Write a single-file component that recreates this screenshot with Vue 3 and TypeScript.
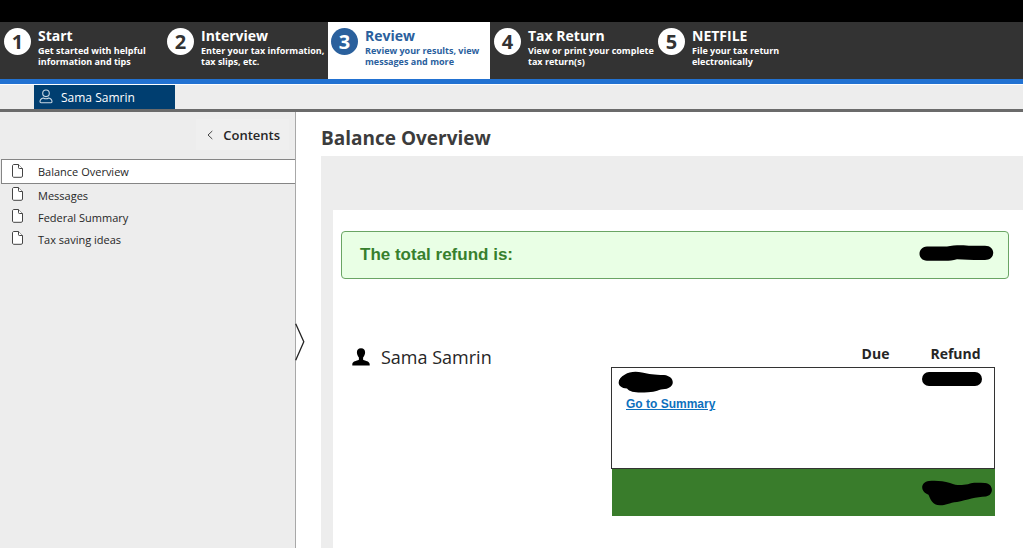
<script setup lang="ts">
interface Step {
  id: number
  title: string
  lines: string[]
}

const steps: Step[] = [
  { id: 1, title: 'Start', lines: ['Get started with helpful', 'information and tips'] },
  { id: 2, title: 'Interview', lines: ['Enter your tax information,', 'tax slips, etc.'] },
  { id: 3, title: 'Review', lines: ['Review your results, view', 'messages and more'] },
  { id: 4, title: 'Tax Return', lines: ['View or print your complete', 'tax return(s)'] },
  { id: 5, title: 'NETFILE', lines: ['File your tax return', 'electronically'] },
]
const activeStep = 3

const pages: string[] = ['Balance Overview', 'Messages', 'Federal Summary', 'Tax saving ideas']
const activePage = 'Balance Overview'
const person = 'Sama Samrin'
</script>

<template>
  <div class="app">
    <header>
      <div class="titlebar"></div>
      <nav class="steps">
        <button
          v-for="step in steps"
          :key="step.id"
          type="button"
          class="step"
          :class="{ active: step.id === activeStep }"
        >
          <span class="number">{{ step.id }}</span>
          <span class="step-text">
            <span class="step-title">{{ step.title }}</span>
            <span v-for="line in step.lines" :key="line" class="step-line">{{ line }}</span>
          </span>
        </button>
      </nav>
      <div class="people">
        <button type="button" class="person-tab">
          <svg width="14" height="16" viewBox="0 0 14 16" fill="none" stroke="#c9d8e4" stroke-width="1.1">
            <circle cx="7" cy="4.300" r="3.300" />
            <path d="M4.300 9C2.300 9.500 1 11.200 1 12.800c0 .6.4.9 1 .9h10c.6 0 1-.3 1-.9 0-1.600-1.300-3.300-3.300-3.800-1.600.9-3.800.9-5.400 0z" />
          </svg>
          <span>{{ person }}</span>
        </button>
      </div>
    </header>

    <div class="body">
      <aside class="sidebar">
        <button type="button" class="contents">
          <svg width="6" height="10" viewBox="0 0 6 10" fill="none" stroke="#444" stroke-width="1">
            <path d="M5.300 1L1 5l4.300 4" />
          </svg>
          <span>Contents</span>
        </button>
        <nav class="pages">
          <a v-for="page in pages" :key="page" href="#" class="page" :class="{ active: page === activePage }">
            <svg width="11" height="14" viewBox="0 0 11 14" fill="#fff" stroke="#444" stroke-width="1">
              <path d="M2 .5h4.500l4 4V12c0 .8-.5 1.300-1.300 1.300H2C1.100 13.300.5 12.800.5 12V2C.5 1 1.100.5 2 .5z" />
              <path d="M6.500.5v3.200c0 .5.3.8.8.8h3.200" />
            </svg>
            <span>{{ page }}</span>
          </a>
        </nav>
        <button type="button" class="expander" aria-label="Resize contents">
          <svg width="10" height="38" viewBox="0 0 10 38" fill="none" stroke="#222" stroke-width="1.300">
            <path d="M.7 .7L8.800 18.800.7 37.300" />
          </svg>
        </button>
      </aside>

      <main class="main">
        <h1>Balance Overview</h1>
        <div class="frame">
          <div class="sheet">
            <section class="banner">
              <h2>The total refund is:</h2>
              <svg width="75" height="17" viewBox="0 0 75 17">
                <path d="M8 1.500h20C35-.3 46-.1 52 .8h14c11 0 11 14 0 14.200-12 .3-20-.8-28-.8-6 2-12 1.500-16 1.500H8C-2 15.500-2 2 8 1.500z" />
              </svg>
            </section>
            <section class="details">
              <div class="person">
                <svg width="18" height="18" viewBox="0 0 18 18">
                  <path d="M9 .3c2.800 0 4.200 1.700 4.100 4.200-.1 2-1 3.800-2 4.900v2.300c2.200 1.200 6.600 1.400 6.600 4.600v1.200H.3v-1.200c0-3.200 4.400-3.400 6.600-4.600V9.400c-1-1.100-1.900-2.900-2-4.900C4.800 2 6.200.3 9 .3z" />
                </svg>
                <span>{{ person }}</span>
              </div>
              <table class="totals">
                <colgroup>
                  <col />
                  <col class="amount" />
                  <col class="amount" />
                </colgroup>
                <thead>
                  <tr>
                    <td></td>
                    <th scope="col">Due</th>
                    <th scope="col">Refund</th>
                  </tr>
                </thead>
                <tbody>
                  <tr>
                    <td class="source">
                      <svg width="55" height="22" viewBox="0 0 55 22">
                        <path d="M7 3.500C11 .5 18 0 24 1.400c7 1.700 12 2 22 2.600 11 1 12 12.500 1 14-6 .2-9 3.200-17 3.200-10 .5-18 .5-21-3.700C-1.500 17-2 8 7 3.500z" />
                      </svg>
                      <a href="#">Go to Summary</a>
                    </td>
                    <td></td>
                    <td class="value">
                      <svg width="60" height="14" viewBox="0 0 60 14">
                        <rect width="60" height="14" rx="7" />
                      </svg>
                    </td>
                  </tr>
                </tbody>
                <tfoot>
                  <tr>
                    <td></td>
                    <td></td>
                    <td class="value">
                      <svg width="70" height="26" viewBox="0 0 70 26">
                        <path d="M7 1c7-.8 14 0 21 2 8 3.200 12 2 18 1.300C51 2 57 3 63 3c9 .5 9 12.500 1 13.500-10 .2-19 3.500-29 5.500-8 .8-12 3.500-17 3.300C10 25 8.500 19 6.500 14.700-2 12-2 2 7 1z" />
                      </svg>
                    </td>
                  </tr>
                </tfoot>
              </table>
            </section>
          </div>
        </div>
      </main>
    </div>
  </div>
</template>

<style>
body {
  margin: 0;
}
</style>

<style scoped>
.app {
  display: flex;
  flex-direction: column;
  min-height: 100vh;
  background: #fff;
  color: #262626;
  font-family: "Open Sans", "Noto Sans", sans-serif;
  font-size: 12px;
}

button {
  margin: 0;
  padding: 0;
  border: 0;
  background: none;
  color: inherit;
  font: inherit;
  text-align: left;
  cursor: pointer;
}

svg {
  display: block;
  flex: none;
}

.titlebar {
  height: 22px;
  background: #000;
}

.steps {
  display: grid;
  grid-template-columns: 163px 165px 162px 164px 1fr;
  height: 57px;
  background: #333;
  border-bottom: 5px solid #2272d2;
}

.step {
  display: flex;
  align-items: flex-start;
  gap: 7px;
  padding: 6px 0 0 4px;
  color: #fff;
}

.step.active {
  padding-left: 3px;
  background: #fff;
  color: #2a609d;
}

.number {
  display: flex;
  flex: none;
  align-items: center;
  justify-content: center;
  width: 27px;
  height: 27px;
  border-radius: 50%;
  background: #fff;
  color: #333;
  font-size: 20px;
  font-weight: 700;
  line-height: 27px;
}

.step.active .number {
  background: #2a609d;
  color: #fff;
}

.step-text {
  display: flex;
  flex-direction: column;
  font-weight: 700;
  white-space: nowrap;
}

.step-title {
  padding-bottom: 2px;
  font-size: 14px;
  line-height: 15px;
}

.step-line {
  font-size: 9px;
  line-height: 11px;
}

.people {
  display: flex;
  padding: 0 34px;
  background: #ededed;
  border-top: 1px solid #fff;
  border-bottom: 3px solid #6b6b6b;
}

.person-tab {
  display: flex;
  align-items: center;
  gap: 8px;
  width: 141px;
  height: 24px;
  padding-left: 5px;
  background: #003e70;
  color: #fff;
}

.body {
  display: flex;
  flex: 1;
}

.sidebar {
  position: relative;
  flex: none;
  box-sizing: border-box;
  width: 296px;
  border-right: 1px solid #a8a8a8;
  background: #ededed;
}

.contents {
  display: flex;
  align-items: center;
  gap: 10px;
  margin: 7px 6px 9px auto;
  padding: 0 9px 0 11px;
  height: 31px;
  background: #efefef;
  font-size: 13px;
  font-weight: 600;
}

.pages {
  display: flex;
  flex-direction: column;
}

.page {
  display: flex;
  align-items: center;
  gap: 15px;
  height: 22px;
  padding-left: 12px;
  color: #262626;
  font-size: 11px;
  text-decoration: none;
}

.page svg {
  margin-bottom: 2px;
}

.page.active {
  height: 23px;
  margin-left: 1px;
  padding-left: 10px;
  border: 1px solid #858585;
  border-right: 0;
  background: #fff;
}

.expander {
  position: absolute;
  top: 211px;
  right: -10px;
}

.main {
  display: flex;
  flex: 1;
  flex-direction: column;
  min-width: 0;
  padding: 12px 0 0 25px;
}

h1 {
  margin: 0 0 4px;
  color: #3c3c3c;
  font-size: 19px;
  font-weight: 700;
  line-height: 28px;
}

.frame {
  display: flex;
  flex: 1;
  padding: 54px 0 0 12px;
  background: #ededed;
}

.sheet {
  flex: 1;
  padding: 21px 14px 0 8px;
  background: #fff;
}

.banner {
  display: flex;
  align-items: center;
  justify-content: space-between;
  height: 46px;
  padding: 0 14px 0 18px;
  border: 1px solid #6aa564;
  border-radius: 4px;
  background: #e9ffe5;
}

.banner svg {
  margin-bottom: 4px;
}

h2 {
  margin: 0;
  color: #37802d;
  font-family: "Liberation Sans", Arial, sans-serif;
  font-size: 17px;
  font-weight: 700;
}

.details {
  display: flex;
  align-items: flex-start;
  justify-content: space-between;
  padding: 61px 14px 32px 11px;
}

.person {
  display: flex;
  align-items: center;
  gap: 11px;
  padding-top: 4px;
  font-size: 18px;
  font-weight: 500;
  line-height: 26px;
}

.totals {
  width: 384px;
  border-collapse: collapse;
  table-layout: fixed;
}

.totals td,
.totals th {
  padding: 0;
  vertical-align: top;
}

.amount {
  width: 80px;
}

.totals th {
  height: 27px;
  padding-left: 2px;
  font-size: 14px;
  font-weight: 700;
  line-height: 27px;
}

.totals tbody tr {
  height: 101px;
  border: 1px solid #333;
}

.totals .source {
  padding: 3px 0 0 6px;
}

.source a {
  display: inline-block;
  margin: 4px 0 0 8px;
  color: #0d70bd;
  font-family: "Liberation Sans", Arial, sans-serif;
  font-weight: 700;
  line-height: 15px;
}

.totals tbody .value {
  padding: 4px 0 0 7px;
}

.totals tfoot tr {
  height: 47px;
  background: #397c2b;
}

.totals tfoot .value {
  padding: 11px 0 0 7px;
}
</style>
